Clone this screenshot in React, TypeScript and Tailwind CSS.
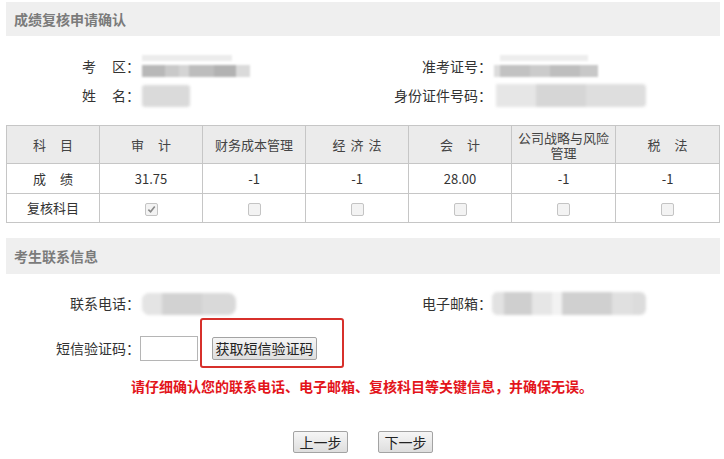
import React from "react";

function Check({ checked }: { checked?: boolean }) {
  return (
    <span className="inline-flex w-[13px] h-[13px] items-center justify-center rounded-[2px] border border-[#c4c4c4] bg-[#f3f3f3] align-middle">
      {checked && (
        <svg width="9" height="9" viewBox="0 0 10 10">
          <path d="M1.5 5.2 L4 7.6 L8.6 1.8" fill="none" stroke="#8a8a8a" strokeWidth="1.8" />
        </svg>
      )}
    </span>
  );
}

function Bar({ title, h }: { title: string; h: string }) {
  return (
    <div className={`${h} bg-[#efefef] flex items-center pl-[8px] text-[14px] font-bold text-[#7b7b7b]`}>
      {title}
    </div>
  );
}

const headers: React.ReactNode[] = [
  <span>科<span className="inline-block w-[14px]" />目</span>,
  <span>审<span className="inline-block w-[14px]" />计</span>,
  "财务成本管理",
  <span>经<span className="inline-block w-[5px]" />济<span className="inline-block w-[5px]" />法</span>,
  <span>会<span className="inline-block w-[14px]" />计</span>,
  <span className="flex flex-col items-center">
    <span className="block h-[15px] leading-[15px]">公司战略与风险</span>
    <span className="block h-[15px] leading-[15px]">管理</span>
  </span>,
  <span>税<span className="inline-block w-[14px]" />法</span>,
];
const widths = ["w-[93px]", "w-[103px]", "w-[103px]", "w-[103px]", "w-[103px]", "w-[104px]", "w-[104px]"];
const scores = ["31.75", "-1", "-1", "28.00", "-1", "-1"];

export default function App() {
  return (
    <div className="w-[724px] h-[459px] bg-white relative overflow-hidden text-[#333] font-['Noto_Sans_CJK_SC','Microsoft_YaHei',sans-serif]">
      <div className="pt-[2px] pl-[6px] pr-[4px]">
        <Bar title="成绩复核申请确认" h="h-[34px]" />

        <div className="pt-[16px] text-[14px]">
          <div className="flex h-[29px] items-center">
            <div className="w-[134px] text-right">考<span className="inline-block w-[16px]" />区：</div>
            <div className="w-[218px] pl-[2px]">
              <div className="relative w-[108px] h-[24px] blur-[1px]">
                <div className="absolute left-0 top-[0px] w-[90px] h-[6px] bg-[#ececec]" />
                <div className="absolute left-0 top-[10px] h-[12px] w-[108px] flex">
                  <div className="w-[23px] bg-[#b8b8b8]" />
                  <div className="w-[14px] bg-[#c9c9c9]" />
                  <div className="w-[10px] bg-[#d4d4d4]" />
                  <div className="w-[25px] bg-[#bdbdbd]" />
                  <div className="w-[22px] bg-[#b2b2b2]" />
                  <div className="w-[14px] bg-[#dadada]" />
                </div>
              </div>
            </div>
            <div className="w-[134px] text-right">准考证号：</div>
            <div className="pl-[2px]">
              <div className="relative w-[104px] h-[24px] blur-[1px]">
                <div className="absolute left-[6px] top-[0px] w-[88px] h-[6px] bg-[#ededed]" />
                <div className="absolute left-0 top-[10px] h-[12px] w-[104px] flex">
                  <div className="w-[6px] bg-[#dcdcdc]" />
                  <div className="w-[30px] bg-[#c2c2c2]" />
                  <div className="w-[20px] bg-[#cbcbcb]" />
                  <div className="w-[30px] bg-[#bebebe]" />
                  <div className="w-[18px] bg-[#c8c8c8]" />
                </div>
              </div>
            </div>
          </div>
          <div className="flex h-[29px] items-center">
            <div className="w-[134px] text-right">姓<span className="inline-block w-[16px]" />名：</div>
            <div className="w-[218px] pl-[2px]">
              <div className="w-[48px] h-[22px] rounded-[3px] bg-[#dadada] blur-[1.5px]" />
            </div>
            <div className="w-[134px] text-right">身份证件号码：</div>
            <div className="pl-[4px]">
              <div className="w-[150px] h-[23px] rounded-[4px] bg-[#dedede] blur-[1.5px] flex">
                <div className="w-[40px] bg-[#e6e6e6]" />
                <div className="w-[50px] bg-[#d6d6d6]" />
              </div>
            </div>
          </div>
        </div>

        <table className="mt-[15px] border-collapse text-[13px] text-center text-[#333]">
          <tbody>
            <tr className="h-[38px] bg-[#ebebeb]">
              {headers.map((hd, i) => (
                <td key={i} className={`${widths[i]} border border-[#c6c6c6] p-0 align-middle text-[#444]`}>
                  {hd}
                </td>
              ))}
            </tr>
            <tr className="h-[30px]">
              <td className="border border-[#c6c6c6] p-0">成<span className="inline-block w-[14px]" />绩</td>
              {scores.map((s, i) => (
                <td key={i} className="border border-[#c6c6c6] p-0">{s}</td>
              ))}
            </tr>
            <tr className="h-[29px]">
              <td className="border border-[#c6c6c6] p-0">复核科目</td>
              {scores.map((_, i) => (
                <td key={i} className="border border-[#c6c6c6] p-0">
                  <Check checked={i === 0} />
                </td>
              ))}
            </tr>
          </tbody>
        </table>

        <div className="mt-[15px]">
          <Bar title="考生联系信息" h="h-[36px]" />
        </div>

        <div className="text-[14px]">
          <div className="mt-[15px] flex h-[29px] items-center">
            <div className="w-[134px] text-right">联系电话：</div>
            <div className="w-[218px] pl-[2px]">
              <div className="w-[94px] h-[22px] rounded-[8px] bg-[#d9d9d9] blur-[1.5px] flex">
                <div className="w-[20px] bg-[#e4e4e4] rounded-l-[8px]" />
                <div className="w-[40px] bg-[#d2d2d2]" />
              </div>
            </div>
            <div className="w-[134px] text-right">电子邮箱：</div>
            <div className="pl-[0px]">
              <div className="w-[154px] h-[23px] rounded-[6px] bg-[#dcdcdc] blur-[1.5px] flex overflow-hidden">
                <div className="w-[12px] bg-[#e2e2e2]" />
                <div className="w-[28px] bg-[#cfcfcf]" />
                <div className="w-[20px] bg-[#e6e6e6]" />
                <div className="w-[10px] bg-[#f2f2f2]" />
                <div className="w-[50px] bg-[#d0d0d0]" />
                <div className="w-[20px] bg-[#e0e0e0]" />
              </div>
            </div>
          </div>

          <div className="mt-[15px] flex h-[30px] items-center">
            <div className="w-[134px] text-right">短信验证码：</div>
            <input className="w-[58px] h-[25px] border border-[#b5b5b5] bg-white outline-none" />
            <button className="ml-[14px] h-[23px] w-[105px] rounded-[2px] border border-[#a3a3a3] bg-gradient-to-b from-[#f6f6f6] to-[#dedede] text-[14px] leading-[21px] text-[#222]">
              获取短信验证码
            </button>
          </div>
        </div>
      </div>

      <div className="mt-[13px] h-[20px] text-center text-[14px] leading-[20px] font-bold text-[#e3141b]">
        请仔细确认您的联系电话、电子邮箱、复核科目等关键信息，并确保无误。
      </div>

      <div className="mt-[35px] flex justify-center gap-[30px] pl-[2px]">
        <button className="w-[55px] h-[22px] rounded-[2px] border border-[#a3a3a3] bg-gradient-to-b from-[#f6f6f6] to-[#dedede] text-[14px] leading-[20px] text-[#222]">
          上一步
        </button>
        <button className="w-[55px] h-[22px] rounded-[2px] border border-[#a3a3a3] bg-gradient-to-b from-[#f6f6f6] to-[#dedede] text-[14px] leading-[20px] text-[#222]">
          下一步
        </button>
      </div>

      <div className="absolute left-[200px] top-[318px] w-[144px] h-[50px] rounded-[3px] border-2 border-[#d7302b]" />
    </div>
  );
}
